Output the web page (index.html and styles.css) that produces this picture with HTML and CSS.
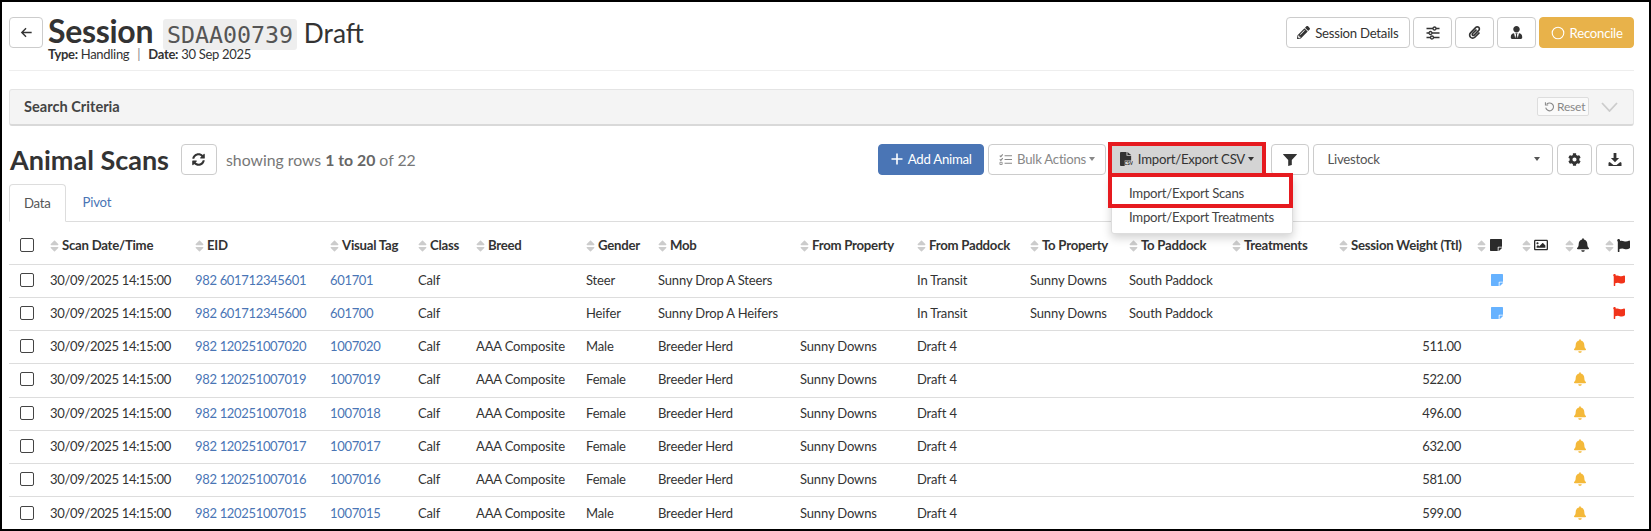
FILE: index.html
```html
<!DOCTYPE html>
<html lang="en">
<head>
<meta charset="utf-8">
<title>Session SDAA00739</title>
<link rel="stylesheet" href="styles.css">
</head>
<body>
<svg class="defs" width="0" height="0" aria-hidden="true">
  <symbol id="i-sort" viewBox="0 0 320 512"><path d="M41 288h238c21.4 0 32.1 25.9 17 41L177 448c-9.4 9.4-24.6 9.4-33.9 0L24 329c-15.1-15.1-4.4-41 17-41zm255-105L177 64c-9.4-9.4-24.6-9.4-33.9 0L24 183c-15.1 15.1-4.4 41 17 41h238c21.4 0 32.1-25.9 17-41z"/></symbol>
  <symbol id="i-note" viewBox="0 0 448 512"><path d="M312 320h136V56c0-13.3-10.7-24-24-24H24C10.7 32 0 42.7 0 56v400c0 13.3 10.7 24 24 24h264V344c0-13.2 10.8-24 24-24zm129 55l-98 98c-4.500 4.500-10.600 7-17 7h-6V352h128v6.100c0 6.300-2.500 12.400-7 16.900z"/></symbol>
  <symbol id="i-image" viewBox="0 0 512 512"><path d="M464 64H48C21.490 64 0 85.490 0 112v288c0 26.510 21.490 48 48 48h416c26.510 0 48-21.490 48-48V112c0-26.510-21.490-48-48-48zm-6 336H54a6 6 0 0 1-6-6V118a6 6 0 0 1 6-6h404a6 6 0 0 1 6 6v276a6 6 0 0 1-6 6zM128 152c-22.091 0-40 17.909-40 40s17.909 40 40 40 40-17.909 40-40-17.909-40-40-40zM96 352h320v-80l-87.515-87.515c-4.686-4.686-12.284-4.686-16.971 0L192 304l-39.515-39.515c-4.686-4.686-12.284-4.686-16.971 0L96 304v48z"/></symbol>
  <symbol id="i-bell" viewBox="0 0 448 512"><path d="M224 512c35.320 0 63.970-28.650 63.970-64H160.030c0 35.350 28.650 64 63.970 64zm215.390-149.710c-19.320-20.760-55.470-51.990-55.470-154.290 0-77.700-54.480-139.900-127.940-155.160V32c0-17.670-14.320-32-31.980-32s-31.980 14.330-31.980 32v20.840C118.560 68.100 64.080 130.300 64.080 208c0 102.300-36.150 133.530-55.470 154.290-6 6.450-8.660 14.160-8.610 21.710.110 16.400 12.980 32 32.100 32h383.800c19.120 0 32-15.600 32.100-32 .050-7.550-2.610-15.270-8.610-21.710z"/></symbol>
  <symbol id="i-flag" viewBox="0 0 512 512"><path d="M349.565 98.783C295.978 98.783 251.721 64 184.348 64c-24.955 0-47.309 4.384-68.045 12.013a55.947 55.947 0 0 0 3.586-23.562C118.117 24.015 94.806 1.206 66.338.048 34.345-1.254 8 24.296 8 56c0 19.026 9.497 35.825 24 45.945V488c0 13.255 10.745 24 24 24h16c13.255 0 24-10.745 24-24v-94.400c28.311-12.064 63.582-22.122 114.435-22.122 53.588 0 97.844 34.783 165.217 34.783 48.169 0 86.667-16.294 122.505-40.858C506.840 359.452 512 349.571 512 339.045v-243.100c0-23.393-24.269-38.870-45.485-29.016-34.338 15.948-76.454 31.854-116.950 31.854z"/></symbol>
</svg>

<main class="page">
  <header class="session-head">
    <button class="btn btn-back" type="button" aria-label="Back">
      <svg class="ic ic-line ic-back" viewBox="0 0 16 16"><path d="M13.500 8H3M7.500 3.500 3 8l4.500 4.500" stroke="currentColor" stroke-width="1.500"/></svg>
    </button>
    <div class="session-title">
      <h1 class="title"><strong>Session</strong> <code class="code">SDAA00739</code> <span class="title-status">Draft</span></h1>
      <p class="meta"><b>Type:</b> Handling <span class="meta-sep">|</span> <b>Date:</b> 30 Sep 2025</p>
    </div>
    <div class="head-actions">
      <button class="btn btn-details" type="button">
        <svg class="ic ic-13" viewBox="0 0 512 512"><path d="M497.900 142.100l-46.100 46.100c-4.700 4.700-12.300 4.700-17 0l-111-111c-4.700-4.700-4.700-12.300 0-17l46.100-46.100c18.700-18.700 49.100-18.700 67.900 0l60.100 60.100c18.800 18.700 18.800 49.100 0 67.900zM284.200 99.800L21.600 362.400.4 483.900c-2.900 16.400 11.400 30.600 27.800 27.800l121.500-21.300 262.600-262.600c4.700-4.700 4.700-12.300 0-17l-111-111c-4.800-4.700-12.400-4.700-17.100 0zM124.100 339.900c-5.500-5.500-5.500-14.300 0-19.800l154-154c5.500-5.500 14.300-5.500 19.800 0s5.500 14.300 0 19.800l-154 154c-5.500 5.500-14.300 5.500-19.800 0zM88 424h48v36.300l-64.500 11.300-31.100-31.100L51.700 376H88v48z"/></svg>
        Session Details
      </button>
      <button class="btn btn-icon" type="button" aria-label="Settings">
        <svg class="ic ic-line ic-14" viewBox="0 0 14 14" stroke="currentColor" stroke-width="1.300"><path d="M.5 2.500h13M.5 7h13M.5 11.500h13"/><circle cx="8.500" cy="2.500" r="1.500" fill="#fff"/><circle cx="4.500" cy="7" r="1.500" fill="#fff"/><circle cx="6" cy="11.500" r="1.500" fill="#fff"/></svg>
      </button>
      <button class="btn btn-icon" type="button" aria-label="Attachments">
        <svg class="ic ic-13" viewBox="0 0 448 512"><path d="M43.246 466.142c-58.430-60.289-57.341-157.511 1.386-217.581L254.392 34c44.316-45.332 116.351-45.336 160.671 0 43.890 44.894 43.943 117.329 0 162.276L232.214 383.128c-29.855 30.537-78.633 30.111-107.982-.998-28.275-29.970-27.368-77.473 1.452-106.953l143.743-146.835c6.182-6.314 16.312-6.422 22.626-.241l22.861 22.379c6.315 6.182 6.422 16.312.241 22.626L171.427 319.927c-4.932 5.045-5.236 13.428-.648 18.292 4.372 4.634 11.245 4.711 15.688.165l182.849-186.851c19.613-20.062 19.613-52.725-.011-72.798-19.189-19.627-49.957-19.637-69.154 0L90.390 293.295c-34.763 35.560-35.299 93.120-1.191 128.313 34.010 35.093 88.985 35.137 123.058.286l172.060-175.999c6.177-6.319 16.307-6.433 22.626-.256l22.877 22.364c6.319 6.177 6.434 16.307.256 22.626l-172.060 175.998c-59.576 60.938-155.943 60.216-214.770-.485z"/></svg>
      </button>
      <button class="btn btn-icon" type="button" aria-label="User">
        <svg class="ic ic-13" viewBox="0 0 448 512"><path d="M224 256c70.700 0 128-57.300 128-128S294.700 0 224 0 96 57.300 96 128s57.300 128 128 128zm95.800 32.600L272 480l-32-136 32-56h-96l32 56-32 136-47.800-191.400C56.900 292 0 350.300 0 422.400V464c0 26.500 21.500 48 48 48h352c26.500 0 48-21.500 48-48v-41.600c0-72.100-56.900-130.400-128.200-133.800z"/></svg>
      </button>
      <button class="btn btn-reconcile" type="button">
        <svg class="ic ic-line ic-14" viewBox="0 0 14 14"><circle cx="7" cy="7" r="5.800" stroke="currentColor" stroke-width="1.100"/></svg>
        Reconcile
      </button>
    </div>
  </header>

  <section class="criteria">
    <h2 class="criteria-title">Search Criteria</h2>
    <button class="btn-reset" type="button">
      <svg class="ic ic-line ic-11" viewBox="0 0 14 14" stroke="currentColor" stroke-width="1.400"><path d="M3.500 4A5 5 0 1 1 2.200 8.500"/><path d="M1.800 1.500V5h3.500" stroke-width="1.300"/></svg>
      Reset
    </button>
    <svg class="ic-line chev" viewBox="0 0 17 10"><path d="M1 1l7.500 8L16 1" stroke="currentColor" stroke-width="1.800"/></svg>
  </section>

  <section class="toolbar">
    <h2 class="scans-title">Animal Scans</h2>
    <button class="btn btn-refresh" type="button" aria-label="Refresh">
      <svg class="ic ic-13" viewBox="0 0 512 512"><path d="M370.720 133.280C339.458 104.008 298.888 87.962 255.848 88c-77.458.068-144.328 53.178-162.791 126.850-1.344 5.363-6.122 9.150-11.651 9.150H24.103c-7.498 0-13.194-6.807-11.807-14.176C33.933 94.924 134.813 8 256 8c66.448 0 126.791 26.136 171.315 68.685L463.030 40.970C478.149 25.851 504 36.559 504 57.941V192c0 13.255-10.745 24-24 24H345.941c-21.382 0-32.090-25.851-16.971-40.971l41.750-41.749zM32 296h134.059c21.382 0 32.090 25.851 16.971 40.971l-41.750 41.750c31.262 29.273 71.835 45.319 114.876 45.280 77.418-.070 144.315-53.144 162.787-126.849 1.344-5.363 6.122-9.150 11.651-9.150h57.304c7.498 0 13.194 6.807 11.807 14.176C478.067 417.076 377.187 504 256 504c-66.448 0-126.791-26.136-171.315-68.685L48.970 471.030C33.851 486.149 8 475.441 8 454.059V320c0-13.255 10.745-24 24-24z"/></svg>
    </button>
    <p class="rows-info">showing rows <b>1 to 20</b> of 22</p>
    <div class="toolbar-actions">
      <button class="btn btn-add" type="button">
        <svg class="ic ic-line ic-12" viewBox="0 0 12 12"><path d="M6 .5v11M.5 6h11" stroke="currentColor" stroke-width="1.600"/></svg>
        Add Animal
      </button>
      <button class="btn btn-bulk" type="button">
        <svg class="ic ic-line ic-13" viewBox="0 0 14 14" stroke="currentColor" stroke-width="1.200"><path d="M6 3h8M6 7h8M6 11h8M.8 2.800l1.200 1.200L4 1.500M.8 6.800 2 8l2-2.500"/><path d="M1 10h2.400v2.400H1z" stroke-width=".9"/></svg>
        Bulk Actions<span class="caret"></span>
      </button>
      <div class="dropdown">
        <button class="btn btn-csv" type="button">
          <svg class="ic ic-csv" viewBox="0 0 14 15"><path d="M0 1a1 1 0 0 1 1-1h6v4h5v5H5v6H1a1 1 0 0 1-1-1z"/><path d="M8 0l4 3.200H8z"/><text class="csv-mark" x="4.500" y="14.500">CSV</text></svg>
          Import/Export CSV<span class="caret caret-dark"></span>
        </button>
        <div class="menu">
          <div class="menu-item menu-item-hl">Import/Export Scans</div>
          <div class="menu-item">Import/Export Treatments</div>
        </div>
      </div>
      <button class="btn btn-filter" type="button" aria-label="Filter">
        <svg class="ic ic-filter" viewBox="0 0 14 12"><path d="M.4 0h13.200c.3 0 .5.400.3.600L8.800 6v5L5.200 12V6L.1.600C-.1.400.1 0 .4 0z"/></svg>
      </button>
      <div class="select-box">Livestock<span class="caret"></span></div>
      <button class="btn btn-gear" type="button" aria-label="Settings">
        <svg class="ic ic-13" viewBox="0 0 512 512"><path d="M487.400 315.700l-42.600-24.600c4.300-23.200 4.300-47 0-70.200l42.600-24.600c4.900-2.800 7.100-8.600 5.500-14-11.100-35.600-30-67.800-54.700-94.600-3.800-4.100-10-5.100-14.800-2.300L380.800 110c-17.900-15.400-38.500-27.300-60.800-35.100V25.800c0-5.600-3.900-10.500-9.400-11.700-36.700-8.200-74.300-7.800-109.200 0-5.500 1.200-9.400 6.100-9.400 11.700V75c-22.200 7.900-42.800 19.800-60.800 35.100L88.700 85.500c-4.900-2.800-11-1.900-14.800 2.300-24.700 26.700-43.600 58.900-54.700 94.600-1.700 5.400.6 11.200 5.500 14L67.300 221c-4.300 23.200-4.300 47 0 70.200l-42.600 24.600c-4.900 2.800-7.100 8.600-5.500 14 11.100 35.600 30 67.800 54.700 94.600 3.800 4.100 10 5.100 14.800 2.300l42.600-24.600c17.900 15.400 38.500 27.300 60.800 35.100v49.200c0 5.600 3.900 10.500 9.400 11.700 36.700 8.200 74.300 7.800 109.200 0 5.500-1.200 9.400-6.100 9.400-11.700v-49.200c22.200-7.900 42.800-19.800 60.800-35.100l42.600 24.600c4.900 2.800 11 1.900 14.800-2.300 24.700-26.700 43.600-58.900 54.700-94.600 1.500-5.500-.7-11.300-5.600-14.100zM256 336c-44.100 0-80-35.900-80-80s35.900-80 80-80 80 35.900 80 80-35.900 80-80 80z"/></svg>
      </button>
      <button class="btn btn-icon" type="button" aria-label="Download">
        <svg class="ic ic-14" viewBox="0 0 14 14"><path d="M5.600 0h2.800v5h2.700L7 9.300 2.900 5h2.700zM.5 9.800l1.200-.9 3.800 3h3l3.800-3 1.200.9V13H.5z"/></svg>
      </button>
    </div>
  </section>

  <nav class="tabs">
    <a class="tab tab-active">Data</a>
    <a class="tab">Pivot</a>
  </nav>

  <table class="grid">
    <colgroup>
      <col class="c-check"><col class="c-date"><col class="c-eid"><col class="c-tag"><col class="c-class"><col class="c-breed"><col class="c-gender"><col class="c-mob"><col class="c-fprop"><col class="c-fpad"><col class="c-tprop"><col class="c-tpad"><col class="c-treat"><col class="c-weight"><col class="c-note"><col class="c-img"><col class="c-bell"><col class="c-flag">
    </colgroup>
    <thead>
      <tr>
        <th class="cell-check"><span class="check"></span></th>
        <th><svg class="sort"><use href="#i-sort"/></svg>Scan Date/Time</th>
        <th><svg class="sort"><use href="#i-sort"/></svg>EID</th>
        <th><svg class="sort"><use href="#i-sort"/></svg>Visual Tag</th>
        <th><svg class="sort"><use href="#i-sort"/></svg>Class</th>
        <th><svg class="sort"><use href="#i-sort"/></svg>Breed</th>
        <th><svg class="sort"><use href="#i-sort"/></svg>Gender</th>
        <th><svg class="sort"><use href="#i-sort"/></svg>Mob</th>
        <th><svg class="sort"><use href="#i-sort"/></svg>From Property</th>
        <th><svg class="sort"><use href="#i-sort"/></svg>From Paddock</th>
        <th><svg class="sort"><use href="#i-sort"/></svg>To Property</th>
        <th><svg class="sort"><use href="#i-sort"/></svg>To Paddock</th>
        <th><svg class="sort"><use href="#i-sort"/></svg>Treatments</th>
        <th class="cell-num"><svg class="sort"><use href="#i-sort"/></svg>Session Weight (Ttl)</th>
        <th><svg class="sort"><use href="#i-sort"/></svg><svg class="hicon hicon-note"><use href="#i-note"/></svg></th>
        <th><svg class="sort"><use href="#i-sort"/></svg><svg class="hicon hicon-wide"><use href="#i-image"/></svg></th>
        <th><svg class="sort"><use href="#i-sort"/></svg><svg class="hicon"><use href="#i-bell"/></svg></th>
        <th><svg class="sort"><use href="#i-sort"/></svg><svg class="hicon hicon-flag"><use href="#i-flag"/></svg></th>
      </tr>
    </thead>
    <tbody>
      <tr><td class="cell-check"><span class="check"></span></td><td class="digits">30/09/2025 14:15:00</td><td class="digits"><a class="link">982 601712345601</a></td><td class="digits"><a class="link">601701</a></td><td>Calf</td><td></td><td>Steer</td><td>Sunny Drop A Steers</td><td></td><td>In Transit</td><td>Sunny Downs</td><td>South Paddock</td><td></td><td class="cell-num"></td><td class="cell-ic ic-note"><svg class="bicon blue"><use href="#i-note"/></svg></td><td></td><td></td><td class="cell-ic ic-flag"><svg class="bicon red"><use href="#i-flag"/></svg></td></tr>
      <tr><td class="cell-check"><span class="check"></span></td><td class="digits">30/09/2025 14:15:00</td><td class="digits"><a class="link">982 601712345600</a></td><td class="digits"><a class="link">601700</a></td><td>Calf</td><td></td><td>Heifer</td><td>Sunny Drop A Heifers</td><td></td><td>In Transit</td><td>Sunny Downs</td><td>South Paddock</td><td></td><td class="cell-num"></td><td class="cell-ic ic-note"><svg class="bicon blue"><use href="#i-note"/></svg></td><td></td><td></td><td class="cell-ic ic-flag"><svg class="bicon red"><use href="#i-flag"/></svg></td></tr>
      <tr><td class="cell-check"><span class="check"></span></td><td class="digits">30/09/2025 14:15:00</td><td class="digits"><a class="link">982 120251007020</a></td><td class="digits"><a class="link">1007020</a></td><td>Calf</td><td>AAA Composite</td><td>Male</td><td>Breeder Herd</td><td>Sunny Downs</td><td>Draft 4</td><td></td><td></td><td></td><td class="cell-num digits">511.00</td><td></td><td></td><td class="cell-ic ic-bell"><svg class="bicon amber"><use href="#i-bell"/></svg></td><td></td></tr>
      <tr><td class="cell-check"><span class="check"></span></td><td class="digits">30/09/2025 14:15:00</td><td class="digits"><a class="link">982 120251007019</a></td><td class="digits"><a class="link">1007019</a></td><td>Calf</td><td>AAA Composite</td><td>Female</td><td>Breeder Herd</td><td>Sunny Downs</td><td>Draft 4</td><td></td><td></td><td></td><td class="cell-num digits">522.00</td><td></td><td></td><td class="cell-ic ic-bell"><svg class="bicon amber"><use href="#i-bell"/></svg></td><td></td></tr>
      <tr><td class="cell-check"><span class="check"></span></td><td class="digits">30/09/2025 14:15:00</td><td class="digits"><a class="link">982 120251007018</a></td><td class="digits"><a class="link">1007018</a></td><td>Calf</td><td>AAA Composite</td><td>Female</td><td>Breeder Herd</td><td>Sunny Downs</td><td>Draft 4</td><td></td><td></td><td></td><td class="cell-num digits">496.00</td><td></td><td></td><td class="cell-ic ic-bell"><svg class="bicon amber"><use href="#i-bell"/></svg></td><td></td></tr>
      <tr><td class="cell-check"><span class="check"></span></td><td class="digits">30/09/2025 14:15:00</td><td class="digits"><a class="link">982 120251007017</a></td><td class="digits"><a class="link">1007017</a></td><td>Calf</td><td>AAA Composite</td><td>Female</td><td>Breeder Herd</td><td>Sunny Downs</td><td>Draft 4</td><td></td><td></td><td></td><td class="cell-num digits">632.00</td><td></td><td></td><td class="cell-ic ic-bell"><svg class="bicon amber"><use href="#i-bell"/></svg></td><td></td></tr>
      <tr><td class="cell-check"><span class="check"></span></td><td class="digits">30/09/2025 14:15:00</td><td class="digits"><a class="link">982 120251007016</a></td><td class="digits"><a class="link">1007016</a></td><td>Calf</td><td>AAA Composite</td><td>Female</td><td>Breeder Herd</td><td>Sunny Downs</td><td>Draft 4</td><td></td><td></td><td></td><td class="cell-num digits">581.00</td><td></td><td></td><td class="cell-ic ic-bell"><svg class="bicon amber"><use href="#i-bell"/></svg></td><td></td></tr>
      <tr><td class="cell-check"><span class="check"></span></td><td class="digits">30/09/2025 14:15:00</td><td class="digits"><a class="link">982 120251007015</a></td><td class="digits"><a class="link">1007015</a></td><td>Calf</td><td>AAA Composite</td><td>Male</td><td>Breeder Herd</td><td>Sunny Downs</td><td>Draft 4</td><td></td><td></td><td></td><td class="cell-num digits">599.00</td><td></td><td></td><td class="cell-ic ic-bell"><svg class="bicon amber"><use href="#i-bell"/></svg></td><td></td></tr>
    </tbody>
  </table>
</main>
</body>
</html>
```
FILE: styles.css
```css
*, *::after { box-sizing: border-box; }
html, body { margin: 0; height: 100%; }
body {
  background: #fff;
  color: #333;
  font-family: Lato, "Liberation Sans", sans-serif;
  font-size: 13.2px;
  letter-spacing: -.25px;
  overflow: hidden;
}
.defs { position: absolute; }
.page {
  height: 531px;
  border: 2px solid #000;
  padding: 15px 15px 0 7px;
  overflow: hidden;
}
.ic { fill: currentColor; display: block; flex: none; }
.ic-line { fill: none; }
.ic-11 { width: 11px; height: 11px; }
.ic-12 { width: 12px; height: 12px; }
.ic-13 { width: 13px; height: 13px; }
.ic-14 { width: 14px; height: 14px; }
.ic-filter { width: 14px; height: 12px; }
.btn {
  display: inline-flex;
  align-items: center;
  justify-content: center;
  gap: 5px;
  height: 31px;
  padding: 0 10px;
  background: #fff;
  border: 1px solid #ccc;
  border-radius: 4px;
  color: #333;
  font: inherit;
  letter-spacing: inherit;
  white-space: nowrap;
}

/* header */
.session-head { display: flex; align-items: flex-start; height: 54px; border-bottom: 1px solid #eee; }
.btn-back { width: 34px; padding: 0; margin-right: 5px; }
.ic-back { width: 15px; height: 15px; }
.session-title { flex: 1; margin-top: 2px; }
.title { margin: 0; font-size: 30px; font-weight: 400; line-height: 24px; color: #333; white-space: nowrap; letter-spacing: 0; }
.title strong { font-size: 32px; font-weight: 700; letter-spacing: -.3px; }
.code {
  font-family: "DejaVu Sans Mono", monospace;
  font-size: 23.300px;
  color: #555;
  background: #eee;
  border-radius: 3px;
  margin-left: 2px;
  padding: 2px 4px;
}
.title-status { margin-left: -1px; font-size: 26.300px; }
.meta { margin: 0; font-size: 13px; line-height: 15px; letter-spacing: -.3px; }
.meta-sep { color: #888; margin: 0 5px; }
.head-actions { display: flex; gap: 3.600px; }
.btn-icon { width: 38.400px; padding: 0; }
.btn-details { width: 124px; padding: 0; }
.btn-reconcile { width: 94.700px; padding: 0; background: #e8b24a; border-color: #e8b24a; color: #fff; }

/* search panel */
.criteria {
  display: flex;
  align-items: center;
  height: 37px;
  margin-top: 18px;
  padding: 0 15px 1px 14px;
  background: #f4f4f4;
  border: 1px solid #e4e4e4;
  border-bottom: 2px solid #d9d9d9;
  border-radius: 3px;
}
.criteria-title { flex: 1; margin: 0; font-size: 14.600px; font-weight: 700; color: #444; letter-spacing: 0; }
.btn-reset {
  display: inline-flex;
  align-items: center;
  gap: 2px;
  width: 52px;
  height: 19px;
  padding: 0 0 0 6px;
  background: #fafafa;
  border: 1px solid #ddd;
  border-radius: 2px;
  color: #888;
  font: inherit;
  font-size: 12px;
  letter-spacing: -.2px;
}
.chev { width: 17px; height: 10px; margin-left: 12px; color: #ccc; }

/* toolbar */
.toolbar { display: flex; align-items: center; height: 31px; margin-top: 18px; }
.scans-title { margin: 0 12px 0 1px; font-size: 27px; font-weight: 700; color: #333; white-space: nowrap; letter-spacing: 0; }
.btn-refresh { width: 36px; padding: 0; }
.rows-info { margin: 0 0 1px 9px; font-size: 15.800px; color: #777; letter-spacing: 0; }
.rows-info b { color: #666; }
.toolbar-actions { display: flex; gap: 3.600px; margin-left: auto; }
.btn-add { width: 106px; padding: 0 0 1px; background: #4a75b5; border-color: #4a75b5; color: #fff; }
.btn-bulk { width: 118.500px; padding: 0 0 1px; color: #888; }
.dropdown { position: relative; margin: 0 4px 0 1px; }
.btn-csv {
  width: 152px;
  padding: 0 0 1px;
  background: #d4d4d4;
  border: 0;
  border-radius: 0;
}
.dropdown::after {
  content: "";
  position: absolute;
  top: -2.300px;
  left: -2.700px;
  right: -2.700px;
  height: 35px;
  border: 4px solid #e61a1f;
  pointer-events: none;
}
.ic-csv { width: 13px; height: 14px; }
.csv-mark { font-size: 5px; font-weight: 700; letter-spacing: 0; }
.caret {
  display: inline-block;
  margin-left: -2px;
  border-top: 4px solid currentColor;
  border-left: 3px solid transparent;
  border-right: 3px solid transparent;
}
.caret-dark { color: #333; }
.menu {
  position: absolute;
  z-index: 5;
  top: 31px;
  left: 0;
  width: 182px;
  height: 59px;
  padding-top: 5px;
  background: #fff;
  border: 1px solid #ddd;
  border-radius: 0 0 3px 3px;
  box-shadow: 0 4px 10px rgba(0, 0, 0, .18);
}
.menu-item { height: 24px; padding-left: 17px; line-height: 24px; color: #444; white-space: nowrap; }
.menu-item-hl { position: relative; }
.menu-item-hl::after {
  content: "";
  position: absolute;
  top: -8px;
  left: -3.700px;
  width: 185px;
  height: 35px;
  border: 4px solid #e61a1f;
}
.btn-filter { width: 38.400px; padding: 0; }
.select-box {
  display: flex;
  align-items: center;
  justify-content: space-between;
  width: 240.500px;
  height: 31px;
  padding: 0 12px 1px 14px;
  border: 1px solid #ccc;
  border-radius: 4px;
  color: #555;
}
.btn-gear { width: 35.400px; padding: 0; }

/* tabs */
.tabs { display: flex; gap: 3px; height: 38px; margin-top: 9px; border-bottom: 1px solid #ddd; }
.tab { display: block; padding: 0 14px; line-height: 36px; color: #4a75b5; }
.tab-active { height: 38px; background: #fff; color: #555; border: 1px solid #ddd; border-bottom-color: #fff; border-radius: 4px 4px 0 0; }

/* table */
.grid { width: 1625px; table-layout: fixed; border-collapse: collapse; }
.c-check { width: 33px; }
.c-date { width: 145px; }
.c-eid { width: 135px; }
.c-tag { width: 88px; }
.c-class { width: 58px; }
.c-breed { width: 110px; }
.c-gender { width: 72px; }
.c-mob { width: 142px; }
.c-fprop { width: 117px; }
.c-fpad { width: 113px; }
.c-tprop { width: 99px; }
.c-tpad { width: 103px; }
.c-treat { width: 107px; }
.c-weight { width: 138px; }
.c-note { width: 44.500px; }
.c-img { width: 43px; }
.c-bell { width: 40px; }
.c-flag { width: 37.500px; }
.grid th, .grid td {
  padding: 0 8px;
  border-bottom: 1px solid #ddd;
  white-space: nowrap;
  overflow: hidden;
  text-align: left;
  vertical-align: middle;
}
.grid th { height: 42px; padding-top: 5px; font-weight: 700; color: #333; }
.grid td { height: 33.250px; padding-bottom: 2px; color: #333; font-size: 13px; letter-spacing: -.15px; }
.grid td.digits { letter-spacing: -.33px; }
.grid tbody tr:last-child td { border-bottom: 0; }
.grid .cell-num { text-align: right; }
.grid th.cell-check { padding: 5px 0 0 11px; }
.grid td.cell-check { padding: 0 0 2px 11px; }
.check { display: block; width: 14px; height: 14px; border: 1.500px solid #444; border-radius: 2px; background: #fff; }
.sort { display: inline-block; width: 9px; height: 14px; margin-right: 3px; fill: #ccc; vertical-align: -3px; }
.hicon { display: inline-block; width: 12px; height: 14px; fill: #2b2b2b; vertical-align: -2px; }
.hicon-note { margin-left: 1px; }
.hicon-wide { width: 14px; }
.hicon-flag { width: 13px; height: 13px; }
.link { color: #4a75b5; }
.grid .cell-ic { text-align: right; overflow: visible; }
.bicon { display: inline-block; width: 12px; height: 14px; vertical-align: -2px; }
.grid .ic-note { padding-right: 11px; }
.grid .ic-bell { padding-right: 10.500px; }
.grid .ic-flag { padding-right: 9px; }
.blue { fill: #66b2ff; }
.red { fill: #f1331a; }
.amber { fill: #f4b93a; }
```
